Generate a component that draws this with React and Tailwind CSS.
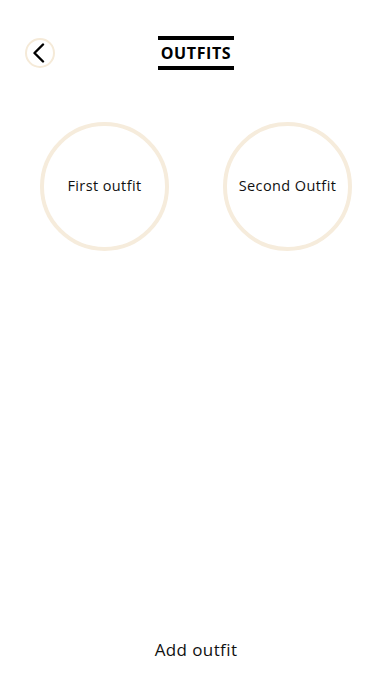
import React from 'react';

const outfits = ['First outfit', 'Second Outfit'];

const App = () => {
    return (
        <div className="w-[392px] h-[696px] bg-white flex flex-col" style={{ fontFamily: '"Open Sans", "Noto Sans", sans-serif' }}>
            {/* header */}
            <div className="relative h-[106px] flex justify-center pt-[36px]">
                <button className="absolute left-[25px] top-[38px] w-[30px] h-[30px] rounded-full border-2 border-[#f5ead8] flex items-center justify-center">
                    <svg width="14" height="20" viewBox="0 0 14 20" fill="none" className="-ml-[2px]">
                        <path d="M11 1.5 L2.5 10 L11 18.5" stroke="#000" strokeWidth="2.4" strokeLinecap="round" strokeLinejoin="round" />
                    </svg>
                </button>
                <div className="w-[76px] h-[34px] border-y-4 border-black flex items-center justify-center">
                    <span className="text-[16px] font-bold tracking-[0.6px] text-black leading-none">OUTFITS</span>
                </div>
            </div>

            {/* outfit circles */}
            <div className="flex justify-between px-10 mt-[16px]">
                {outfits.map((name) => (
                    <div key={name} className="w-[129px] h-[129px] rounded-full border-4 border-[#f6ecdc] flex items-center justify-center">
                        <span className="text-[14.5px] tracking-[0.4px] text-[#111] -mt-[1px]">{name}</span>
                    </div>
                ))}
            </div>

            <div className="flex-1" />

            <div className="flex justify-center pb-[34px]">
                <button className="text-[17px] tracking-[0.4px] text-[#111]">Add outfit</button>
            </div>
        </div>
    );
};

export default App;
